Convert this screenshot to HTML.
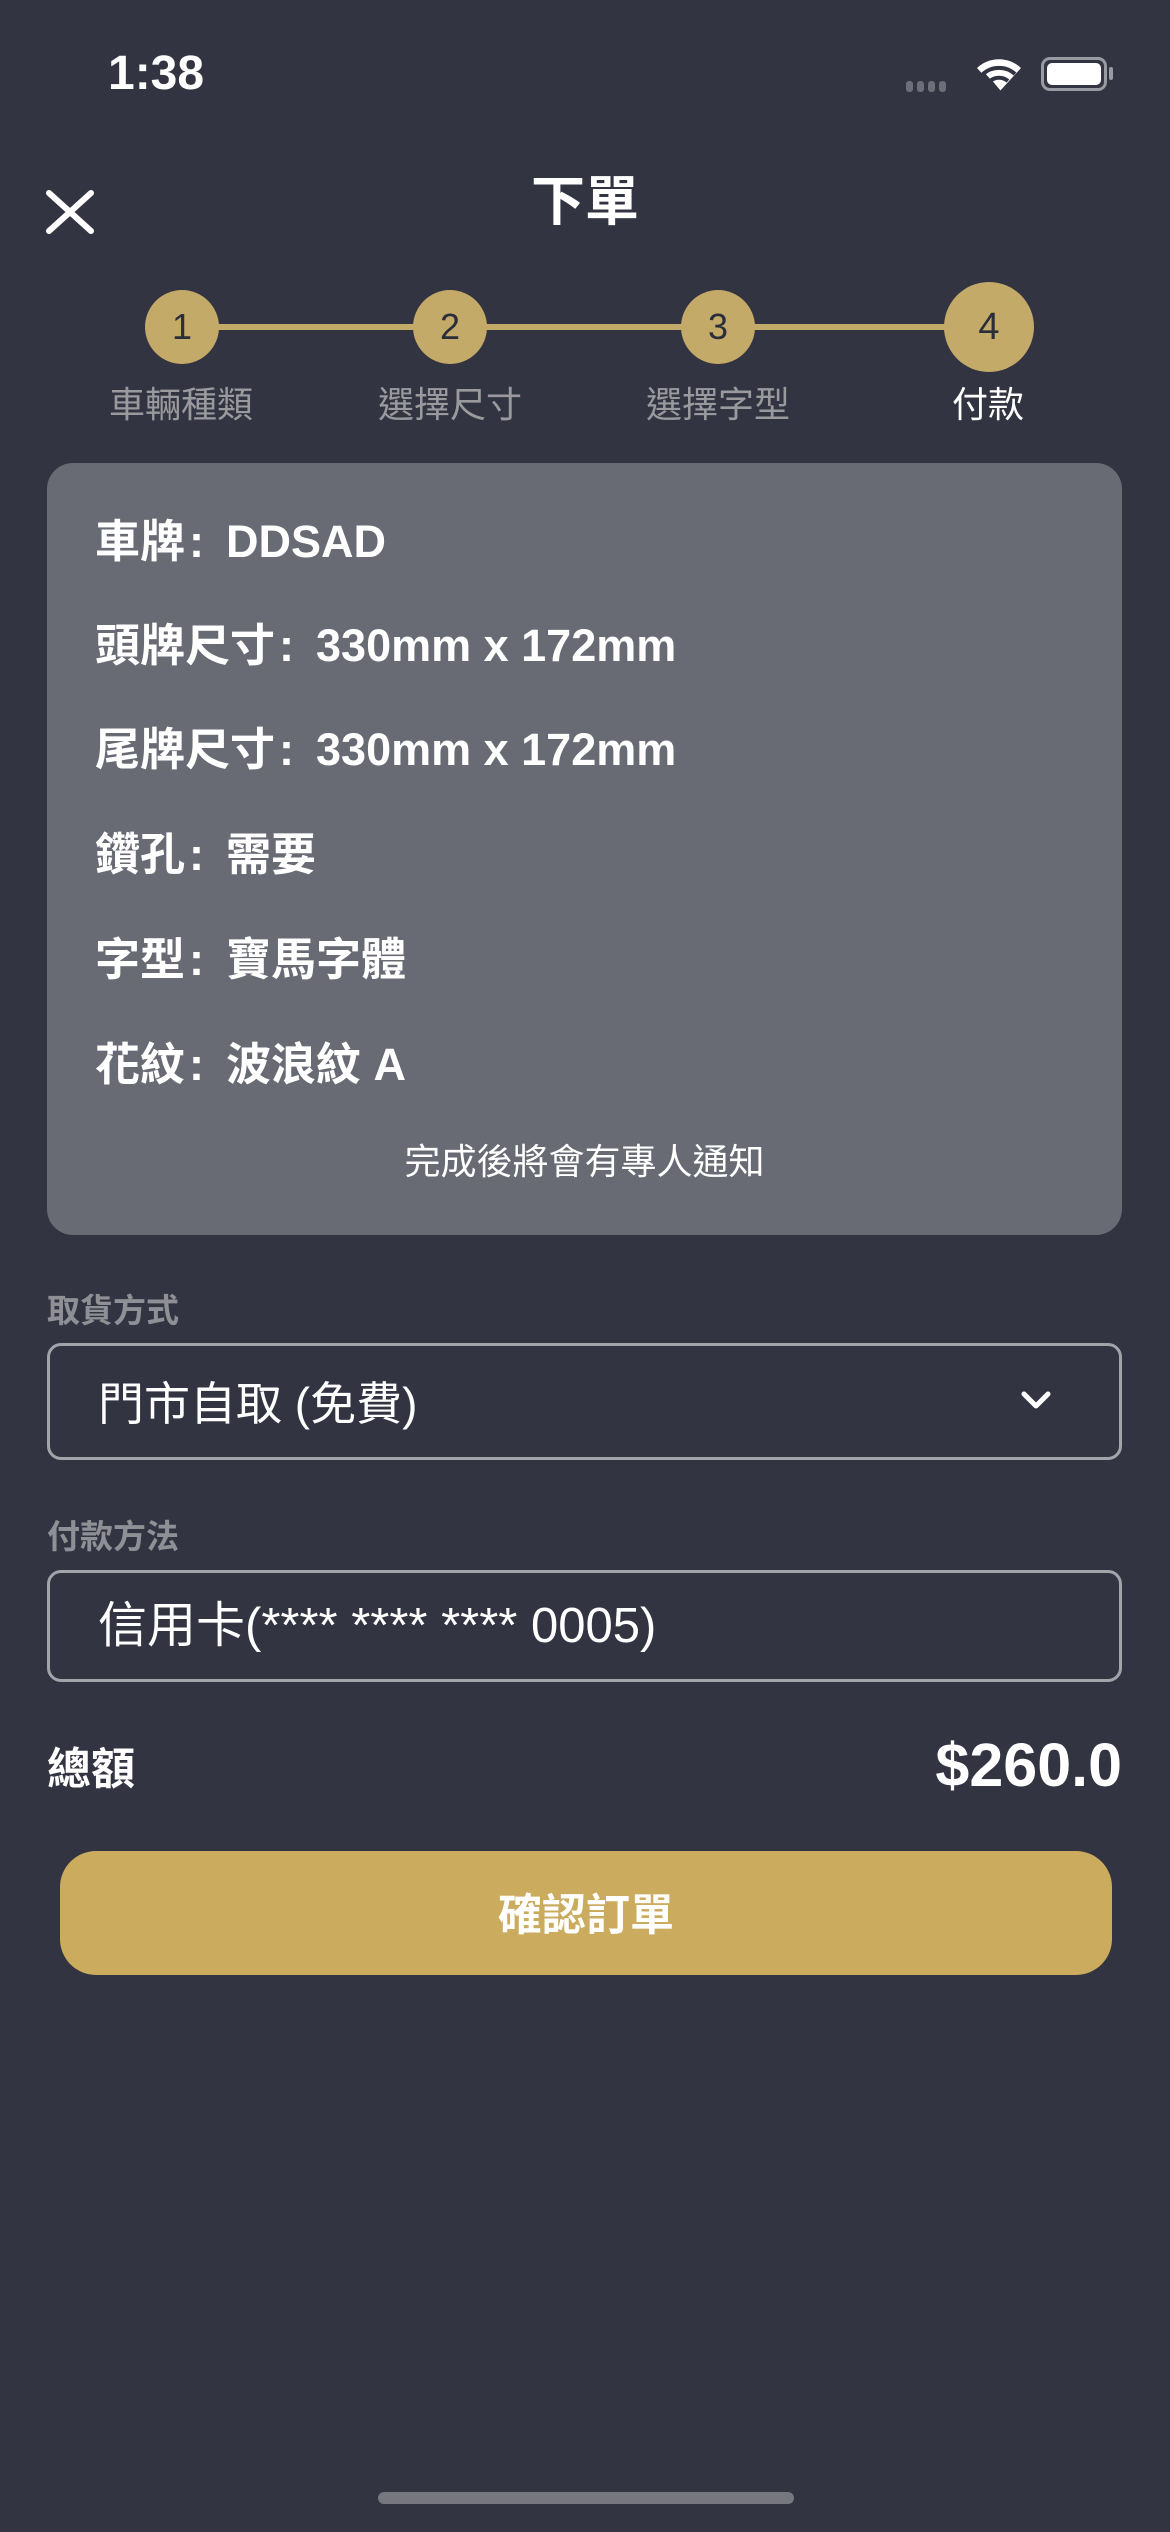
<!DOCTYPE html>
<html><head><meta charset="utf-8"><style>
*{margin:0;padding:0;box-sizing:border-box}
body{width:1170px;height:2532px;background:#333441;font-family:"Liberation Sans","Noto Sans CJK TC",sans-serif;color:#fff;position:relative;overflow:hidden}
.abs{position:absolute}
.c{position:absolute;border-radius:50%;background:#c4aa68;color:#2b2d3a;display:flex;align-items:center;justify-content:center;font-size:36px}
.lbl{position:absolute;top:380px;width:200px;text-align:center;font-size:36px;color:#9a9a9e;line-height:50px}
.row{position:absolute;left:95px;font-size:45px;font-weight:bold;line-height:60px;white-space:nowrap}
.row i{font-style:normal;margin:0 22px 0 4px}
.box{position:absolute;left:47px;width:1075px;border:3px solid #a3a3aa;border-radius:14px}
.flabel{position:absolute;left:47px;font-size:33px;color:#8f8f96;font-weight:bold}
</style></head><body>
<div class="abs" style="left:108px;top:46px;font-size:48px;font-weight:600">1:38</div>
<div class="abs" style="left:906px;top:81px;display:flex;gap:4px">
<div style="width:7px;height:11px;background:#6d6e77;border-radius:3px"></div><div style="width:7px;height:11px;background:#6d6e77;border-radius:3px"></div><div style="width:7px;height:11px;background:#6d6e77;border-radius:3px"></div><div style="width:7px;height:11px;background:#6d6e77;border-radius:3px"></div></div>
<svg class="abs" style="left:974px;top:54px" width="50" height="40" viewBox="0 0 50 40"><path d="M25 38 L3 14 A32 32 0 0 1 47 14 Z" fill="#fff"/><path d="M25 38 L9 20 A24 24 0 0 1 41 20" fill="none" stroke="#333441" stroke-width="4"/><path d="M25 38 L16 27 A14 14 0 0 1 34 27" fill="none" stroke="#333441" stroke-width="4"/></svg>
<div class="abs" style="left:1041px;top:57px;width:66px;height:34px;border:3px solid #9a9aa2;border-radius:9px;padding:3px"><div style="width:100%;height:100%;background:#fff;border-radius:5px"></div></div>
<div class="abs" style="left:1109px;top:67px;width:4px;height:13px;background:#9a9aa2;border-radius:2px"></div>
<svg class="abs" style="left:45px;top:189px" width="50" height="46"><path d="M4 4 L46 42 M46 4 L4 42" stroke="#fff" stroke-width="6" stroke-linecap="round"/></svg>
<div class="abs" style="left:0;width:1170px;top:157px;text-align:center;font-size:54px;font-weight:bold">下單</div>
<div class="abs" style="left:181px;top:324px;width:807px;height:6px;background:#c4aa68"></div>
<div class="c" style="left:145px;top:290px;width:74px;height:74px">1</div>
<div class="c" style="left:413px;top:290px;width:74px;height:74px">2</div>
<div class="c" style="left:681px;top:290px;width:74px;height:74px">3</div>
<div class="c" style="left:944px;top:282px;width:90px;height:90px;font-size:38px">4</div>
<div class="lbl" style="left:81px">車輛種類</div>
<div class="lbl" style="left:350px">選擇尺寸</div>
<div class="lbl" style="left:618px">選擇字型</div>
<div class="lbl" style="left:888px;color:#fff">付款</div>
<div class="abs" style="left:47px;top:463px;width:1075px;height:772px;background:#686a74;border-radius:26px"></div>
<div class="row" style="top:512px">車牌<i>:</i>DDSAD</div>
<div class="row" style="top:616px">頭牌尺寸<i>:</i>330mm x 172mm</div>
<div class="row" style="top:720px">尾牌尺寸<i>:</i>330mm x 172mm</div>
<div class="row" style="top:825px">鑽孔<i>:</i>需要</div>
<div class="row" style="top:930px">字型<i>:</i>寶馬字體</div>
<div class="row" style="top:1035px">花紋<i>:</i>波浪紋 A</div>
<div class="abs" style="left:47px;width:1075px;top:1140px;text-align:center;font-size:36px;line-height:44px">完成後將會有專人通知</div>
<div class="flabel" style="top:1284px">取貨方式</div>
<div class="box" style="top:1343px;height:117px"></div>
<div class="abs" style="left:98px;top:1368px;font-size:46px">門市自取 (免費)</div>
<svg class="abs" style="left:1020px;top:1390px" width="32" height="22"><path d="M4 4 L16 16 L28 4" fill="none" stroke="#fff" stroke-width="5" stroke-linecap="round" stroke-linejoin="round"/></svg>
<div class="flabel" style="top:1510px">付款方法</div>
<div class="box" style="top:1570px;height:112px"></div>
<div class="abs" style="left:98px;top:1586px;font-size:49px">信用卡(**** **** **** 0005)</div>
<div class="abs" style="left:47px;top:1733px;font-size:44px;font-weight:bold">總額</div>
<div class="abs" style="right:48px;top:1730px;font-size:61px;font-weight:bold">$260.0</div>
<div class="abs" style="left:60px;top:1851px;width:1052px;height:124px;background:#cbab5e;border-radius:36px;display:flex;align-items:center;justify-content:center;font-size:44px;font-weight:bold;padding-bottom:4px">確認訂單</div>
<div class="abs" style="left:378px;top:2492px;width:416px;height:12px;background:#77787f;border-radius:6px"></div>
</body></html>
